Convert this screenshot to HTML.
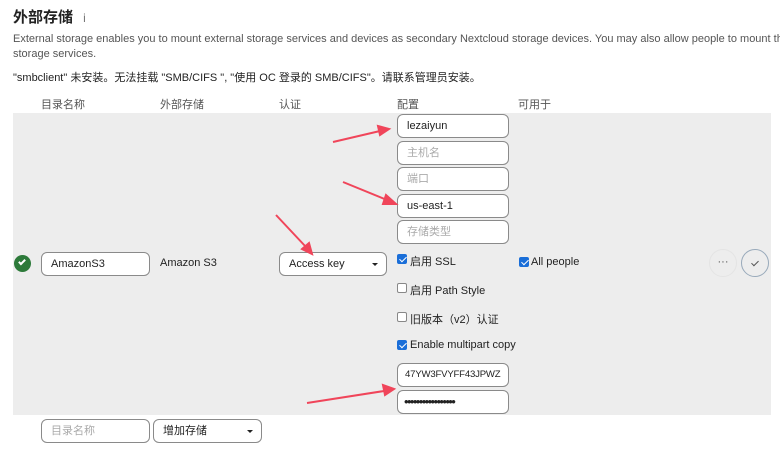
<!DOCTYPE html>
<html><head><meta charset="utf-8"><style>
*{box-sizing:border-box;margin:0;padding:0}
html,body{width:780px;height:451px;overflow:hidden}
body{background:#fff;font-family:"Liberation Sans","Noto Sans CJK SC",sans-serif;color:#222;position:relative;font-size:11px}
.a{position:absolute;white-space:nowrap}
.in{position:absolute;height:24px;border:1px solid #8a8a8a;border-radius:6px;background:#fff;font-size:11px;line-height:22px;padding-left:9px;overflow:hidden}
.ph{color:#aaa}
.cb{position:absolute;width:10px;height:10px;border:1px solid #888;border-radius:2px;background:#fff}
.cb.on{background:#1a6ed8;border-color:#1a6ed8}
.cb.on:after{content:"";position:absolute;left:2.5px;top:0;width:3px;height:6px;border:solid #fff;border-width:0 1.5px 1.5px 0;transform:rotate(45deg)}
.caret{position:absolute;right:8px;top:10px;border:3px solid transparent;border-top:3px solid #222}
</style></head><body>
<div class="a" style="left:13px;top:6px;font-size:15px;font-weight:bold">外部存储 <span style="font-weight:normal;color:#777;font-size:12px;margin-left:6px">i</span></div>
<div class="a" style="left:13px;top:32px;width:767px;overflow:hidden;color:#555;font-size:11px;line-height:15px">External storage enables you to mount external storage services and devices as secondary Nextcloud storage devices. You may also allow people to mount their own ext<br>storage services.</div>
<div class="a" style="left:13px;top:69px;font-size:11px">"smbclient" 未安装。无法挂载 "SMB/CIFS ", "使用 OC 登录的 SMB/CIFS"。请联系管理员安装。</div>
<div class="a" style="left:41px;top:96px;color:#555">目录名称</div>
<div class="a" style="left:160px;top:96px;color:#555">外部存储</div>
<div class="a" style="left:279px;top:96px;color:#555">认证</div>
<div class="a" style="left:397px;top:96px;color:#555">配置</div>
<div class="a" style="left:518px;top:96px;color:#555">可用于</div>
<div class="a" style="left:13px;top:113px;width:758px;height:302px;background:#ededed"></div>
<div class="a" style="left:14px;top:255px;width:17px;height:17px;border-radius:50%;background:#2d7a3a"></div>
<div class="a" style="left:20px;top:258px;width:4px;height:7px;border:solid #fff;border-width:0 2px 2px 0;transform:rotate(45deg)"></div>
<div class="in" style="left:41px;top:252px;width:109px">AmazonS3</div>
<div class="a" style="left:160px;top:257px">Amazon S3</div>
<div class="in" style="left:279px;top:252px;width:108px">Access key<span class="caret"></span></div>
<div class="in" style="left:397px;top:114px;width:112px">lezaiyun</div>
<div class="in ph" style="left:397px;top:141px;width:112px">主机名</div>
<div class="in ph" style="left:397px;top:167px;width:112px">端口</div>
<div class="in" style="left:397px;top:194px;width:112px">us-east-1</div>
<div class="in ph" style="left:397px;top:220px;width:112px">存储类型</div>
<div class="cb on" style="left:397px;top:254px"></div><div class="a" style="left:410px;top:253px">启用 SSL</div>
<div class="cb" style="left:397px;top:283px"></div><div class="a" style="left:410px;top:282px">启用 Path Style</div>
<div class="cb" style="left:397px;top:312px"></div><div class="a" style="left:410px;top:311px">旧版本（v2）认证</div>
<div class="cb on" style="left:397px;top:340px"></div><div class="a" style="left:410px;top:339px">Enable multipart copy</div>
<div class="in" style="left:397px;top:363px;width:112px;font-size:9.6px;padding-left:7px;letter-spacing:-0.2px">47YW3FVYFF43JPWZ</div>
<div class="in" style="left:397px;top:390px;width:112px;font-size:13px;padding-left:6px;letter-spacing:-1.6px">•••••••••••••••••</div>
<div class="cb on" style="left:519px;top:257px"></div><div class="a" style="left:531px;top:256px">All people</div>
<div class="a" style="left:709px;top:249px;width:28px;height:28px;border-radius:50%;border:1px solid #e4e4e4;text-align:center;line-height:24px;color:#555">···</div>
<div class="a" style="left:741px;top:249px;width:28px;height:28px;border-radius:50%;border:1px solid #9ab"></div>
<div class="a" style="left:753px;top:259px;width:4px;height:7px;border:solid #555;border-width:0 1.3px 1.3px 0;transform:rotate(45deg)"></div>
<div class="in ph" style="left:41px;top:419px;width:109px">目录名称</div>
<div class="in" style="left:153px;top:419px;width:109px">增加存储<span class="caret"></span></div>
<svg class="a" style="left:0;top:0" width="780" height="451">
<g stroke="#f0455a" stroke-width="2" fill="#f0455a">
<line x1="333" y1="142" x2="380" y2="131"/><polygon points="389,129 378,126 380,135"/>
<line x1="343" y1="182" x2="387" y2="200"/><polygon points="396,204 386,195 383,204"/>
<line x1="276" y1="215" x2="306" y2="247"/><polygon points="312,254 309,243 302,249"/>
<line x1="307" y1="403" x2="384" y2="391"/><polygon points="394,389 383,385 385,395"/>
</g></svg>
</body></html>
